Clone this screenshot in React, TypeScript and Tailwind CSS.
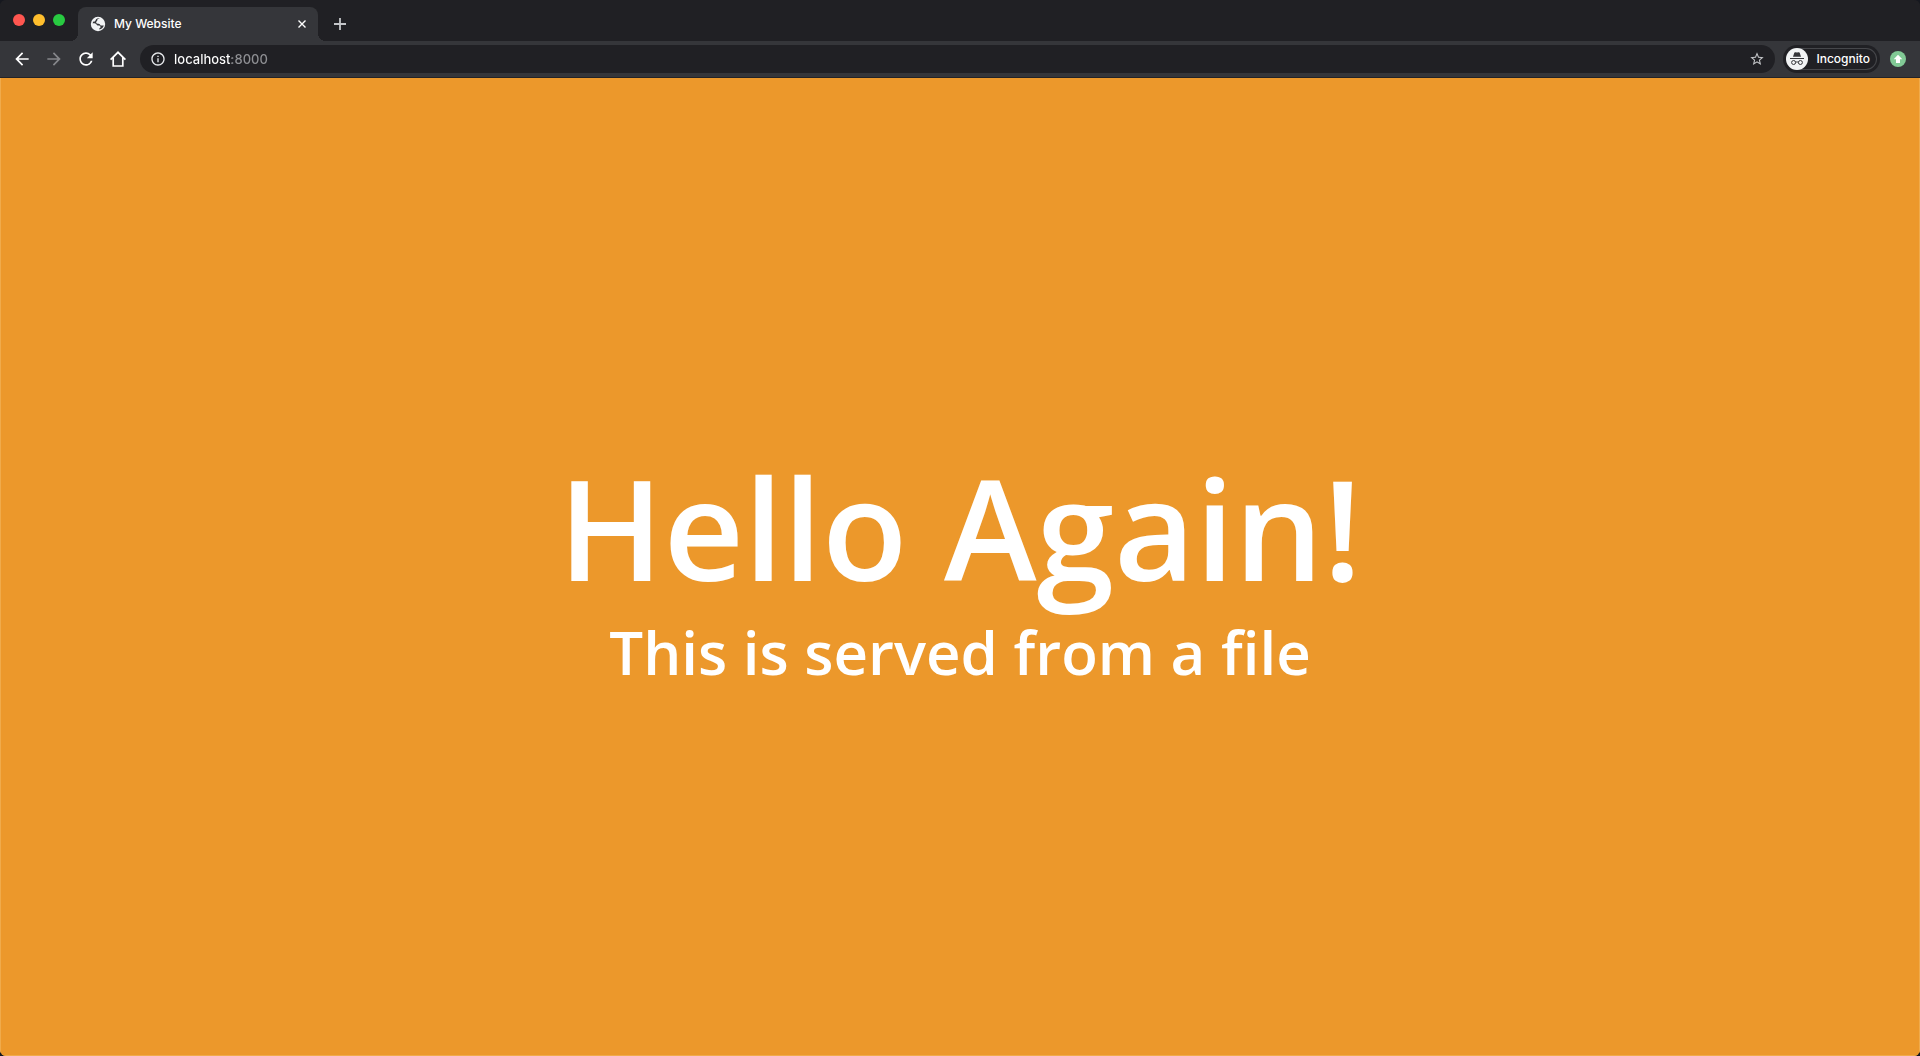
import { MdArrowBack, MdArrowForward, MdInfoOutline, MdRefresh, MdStarBorder } from "react-icons/md";

const iconButton = "flex size-8 items-center justify-center rounded-full text-white hover:bg-white/10";

function Globe() {
  return (
    <svg viewBox="0 0 16 16" className="size-4 shrink-0" aria-hidden="true">
      <circle cx="8" cy="8" r="7.2" fill="#f1f3f4" />
      <path
        d="M9.800 2.400C8.200 2.500 7.300 3.200 7.300 4.200c0 .8-.9 1-1.100 1.800-.2 1 .5 1.600 1.600 1.700 1.100.1 2 .2 2.300 1 .3.700.8 1 1.500.9l2.200-.2c-.6 2.200-2.300 3.700-4.500 4v-1c1-.3 1.400-.9 1.200-1.600-.2-.9-1-1.200-2-1.200-.8 0-1.300-.3-1.800-.9-.9-1-2.200-1.500-4-1.300.1-.700.3-1.300.6-1.800.8.2 1.500 0 1.900-.6.5-.7.5-1.500 1.200-2.100.8-.700 2-.9 3.400-.5z"
        fill="#35363a"
      />
    </svg>
  );
}

function Incognito() {
  return (
    <svg viewBox="0 0 22 22" className="size-[22px] shrink-0" aria-hidden="true">
      <circle cx="11" cy="11" r="11" fill="#f1f3f4" />
      <path d="M7 8.800 8.200 4.900c.2-.7.700-.9 1.300-.7l1.500.4 1.500-.4c.6-.2 1.100 0 1.300.7L15 8.800z" fill="#35363a" />
      <path d="M4 10.500h14" stroke="#35363a" strokeWidth="1" />
      <g fill="none" stroke="#35363a" strokeWidth="1">
        <circle cx="7.600" cy="14.500" r="2" />
        <circle cx="14.400" cy="14.500" r="2" />
        <path d="M9.600 14.300c.8-.5 2-.5 2.800 0" />
      </g>
    </svg>
  );
}

function TabStrip() {
  return (
    <header className="flex h-[41px] items-end bg-[#202024]">
      <div className="mb-[15px] ml-[13px] flex gap-2">
        <button aria-label="Close window" className="size-3 rounded-full bg-[#ff5650]" />
        <button aria-label="Minimize window" className="size-3 rounded-full bg-[#ffbe2d]" />
        <button aria-label="Zoom window" className="size-3 rounded-full bg-[#28ca41]" />
      </div>
      <div className="ml-[5px] flex items-end">
        <span className="size-2 bg-[radial-gradient(circle_at_0_0,#202024_8px,#35363a_8px)]" />
        <div className="flex h-[34px] w-60 items-center rounded-t-lg bg-[#35363a] pr-2 pl-3">
          <Globe />
          <span className="ml-2 flex-1 text-xs font-medium text-white">My Website</span>
          <button aria-label="Close tab" className="flex size-4 items-center justify-center text-white">
            <svg viewBox="0 0 8 8" className="size-2" fill="none" stroke="currentColor" strokeWidth="1.400">
              <path d="M.5.5l7 7M7.500.5l-7 7" />
            </svg>
          </button>
        </div>
        <span className="size-2 bg-[radial-gradient(circle_at_100%_0,#202024_8px,#35363a_8px)]" />
      </div>
      <button aria-label="New tab" className="mb-[7px] ml-1 flex size-5 items-center justify-center text-[#c4c6c9]">
        <svg viewBox="0 0 12 12" className="size-3" fill="none" stroke="currentColor" strokeWidth="1.800">
          <path d="M6 0v12M0 6h12" />
        </svg>
      </button>
    </header>
  );
}

function Toolbar() {
  return (
    <nav className="flex h-[37px] items-center border-b border-[#232326] bg-[#35363a] pr-3.5 pl-1.5">
      <button aria-label="Back" className={iconButton}>
        <MdArrowBack className="size-5" />
      </button>
      <button aria-label="Forward" disabled className="flex size-8 items-center justify-center text-[#85868a]">
        <MdArrowForward className="size-5" />
      </button>
      <button aria-label="Reload" className={iconButton}>
        <MdRefresh className="size-5" />
      </button>
      <button aria-label="Home" className={iconButton}>
        <svg viewBox="0 0 16 16" className="size-4" fill="none" stroke="currentColor" strokeWidth="1.700">
          <path d="M.6 8.700 8 1.300l7.400 7.400M3.200 6.500V15h9.600V6.500" />
        </svg>
      </button>
      <form
        className="ml-1.5 flex h-7 flex-1 items-center rounded-full bg-[#202024] pr-2.5 pl-2.5"
        onSubmit={(event) => event.preventDefault()}
      >
        <MdInfoOutline className="size-4 shrink-0 text-[#e8eaed]" />
        <input
          aria-label="Address"
          defaultValue="localhost:8000"
          spellCheck={false}
          className="ml-2 h-5 min-w-0 flex-1 bg-linear-[to_right,#ffffff_0_58px,#8f9094_58px] bg-clip-text text-[13px] font-medium text-transparent caret-white outline-none"
        />
        <button type="button" aria-label="Bookmark this page" className="text-[#c4c6c9]">
          <MdStarBorder className="size-4" />
        </button>
      </form>
      <button className="ml-2 flex h-7 items-center rounded-full bg-[#202024] p-[3px]">
        <span className="flex h-[22px] items-center rounded-full border-y border-r border-[#46474b] pr-1.5">
          <Incognito />
          <span className="ml-2 text-xs font-medium text-white">Incognito</span>
        </span>
      </button>
      <button aria-label="Update available" className="ml-2.5">
        <svg viewBox="0 0 16 16" className="size-4">
          <circle cx="8" cy="8" r="8" fill="#81c995" />
          <path d="M8 3.800 12.300 8.200H10V12H6V8.200H3.700z" fill="#fff" />
        </svg>
      </button>
    </nav>
  );
}

export default function App() {
  return (
    <div className="min-h-screen bg-[#16181f]">
      <div className="flex min-h-screen flex-col overflow-hidden rounded-md bg-[#202024] font-['Inter',sans-serif]">
        <TabStrip />
        <Toolbar />
        <main className="flex flex-1 flex-col items-center justify-center border-x border-b border-[#f0ab4b] bg-[#ec982b] text-center font-['Open_Sans',sans-serif] text-white">
          <h1 className="text-[140px] leading-[170px] font-semibold">Hello Again!</h1>
          <p className="text-[60px] leading-[80px] font-semibold">This is served from a file</p>
        </main>
      </div>
    </div>
  );
}
